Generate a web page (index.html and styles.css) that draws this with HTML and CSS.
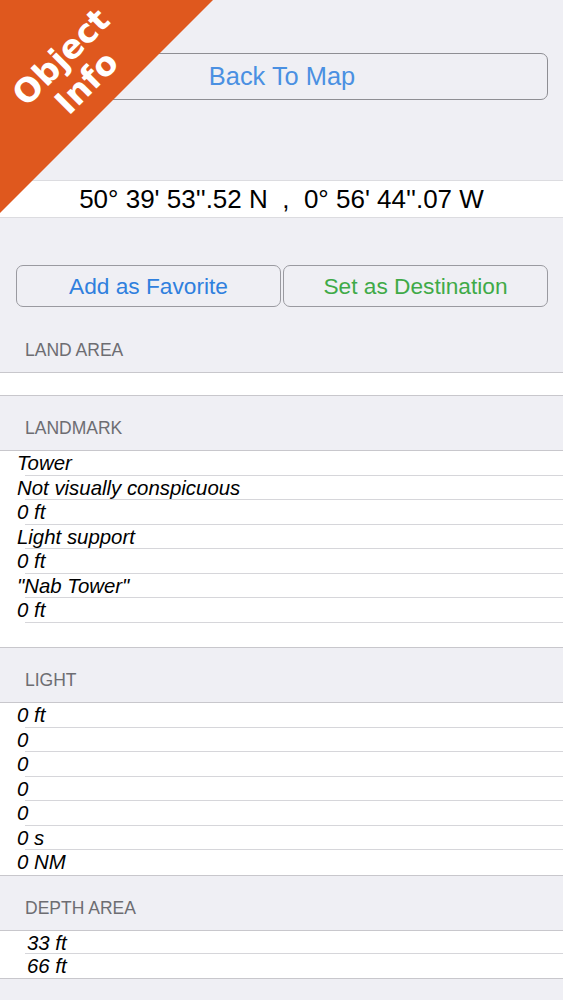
FILE: index.html
```html
<!DOCTYPE html>
<html lang="en">

<head>
    <meta charset="UTF-8">
    <meta name="viewport" content="width=device-width, initial-scale=1.0">
    <title>Object Info</title>
    <link rel="stylesheet" href="styles.css">
</head>

<body>
    <div class="ribbon">
        <div class="ribbon-text">Object<br>Info</div>
    </div>

    <div class="back-wrap">
        <button class="btn btn-back">Back To Map</button>
    </div>

    <div class="coords">50° 39' 53''.52 N &nbsp;, &nbsp;0° 56' 44''.07 W</div>

    <div class="actions">
        <button class="btn btn-fav">Add as Favorite</button>
        <button class="btn btn-dest">Set as Destination</button>
    </div>

    <div class="section-head first">LAND AREA</div>
    <ul class="rows">
        <li class="row empty short"></li>
    </ul>

    <div class="section-head">LANDMARK</div>
    <ul class="rows">
        <li class="row">Tower</li>
        <li class="row">Not visually conspicuous</li>
        <li class="row">0 ft</li>
        <li class="row">Light support</li>
        <li class="row">0 ft</li>
        <li class="row">"Nab Tower"</li>
        <li class="row">0 ft</li>
        <li class="row empty"></li>
    </ul>

    <div class="section-head">LIGHT</div>
    <ul class="rows">
        <li class="row">0 ft</li>
        <li class="row">0</li>
        <li class="row">0</li>
        <li class="row">0</li>
        <li class="row">0</li>
        <li class="row">0 s</li>
        <li class="row">0 NM</li>
    </ul>

    <div class="section-head">DEPTH AREA</div>
    <ul class="rows indented">
        <li class="row">33 ft</li>
        <li class="row">66 ft</li>
    </ul>
</body>

</html>
```

FILE: styles.css
```css
* {
    padding: 0;
    margin: 0;
    box-sizing: border-box;
}

ul {
    list-style-type: none;
}

body {
    background-color: #efeff4;
    font-family: "Liberation Sans", Arial, sans-serif;
    color: #000;
    overflow: hidden;
}

/* corner ribbon */
.ribbon {
    position: absolute;
    left: 0;
    top: 0;
    width: 213px;
    height: 213px;
    background-color: #df581e;
    clip-path: polygon(0 0, 100% 0, 0 100%);
    z-index: 2;
}

.ribbon-text {
    position: absolute;
    left: 74px;
    top: 70px;
    width: 0;
    height: 0;
    display: flex;
    align-items: center;
    justify-content: center;
    color: #fff;
    font-family: "DejaVu Sans", sans-serif;
    font-weight: bold;
    font-size: 33px;
    line-height: 36px;
    text-align: center;
    white-space: nowrap;
    transform: rotate(-45deg);
}

/* buttons */
.btn {
    display: block;
    background: transparent;
    border: 1px solid #8e8e93;
    border-radius: 7px;
    font-family: "Liberation Sans", Arial, sans-serif;
    cursor: pointer;
}

.back-wrap {
    padding: 53px 15px 0 16px;
}

.btn-back {
    width: 100%;
    height: 47px;
    font-size: 25.4px;
    color: #4a90e2;
}

.coords {
    margin-top: 80px;
    height: 38px;
    line-height: 36px;
    background-color: #fff;
    border-top: 1px solid #dcdce0;
    border-bottom: 1px solid #dcdce0;
    text-align: center;
    font-size: 26px;
}

.actions {
    display: flex;
    gap: 2px;
    padding: 0 15px 0 16px;
    margin-top: 47px;
}

.actions .btn {
    flex: 1;
    height: 42px;
    font-size: 22.7px;
    border-color: #9a9aa0;
}

.btn-fav {
    color: #2f80de;
}

.btn-dest {
    color: #3faa48;
}

/* table sections */
.section-head {
    height: 54px;
    padding: 0 0 12px 25px;
    display: flex;
    align-items: flex-end;
    font-size: 17.5px;
    line-height: 20px;
    color: #6d6d72;
}

.section-head.first {
    height: 65px;
}

.rows {
    background-color: #fff;
    border-top: 1px solid #c8c7cc;
    border-bottom: 1px solid #c8c7cc;
}

.row {
    position: relative;
    height: 24.5px;
    padding-left: 17px;
    font-size: 20.4px;
    line-height: 24px;
    font-style: italic;
}

.row.short {
    height: 22px;
}

.row::after {
    content: "";
    position: absolute;
    left: 25px;
    right: 0;
    bottom: 0;
    height: 1px;
    background-color: #d6d6da;
}

.row:last-child::after,
.row.empty::after {
    display: none;
}

.rows.indented .row {
    height: 23.5px;
    padding-left: 27px;
}
```
